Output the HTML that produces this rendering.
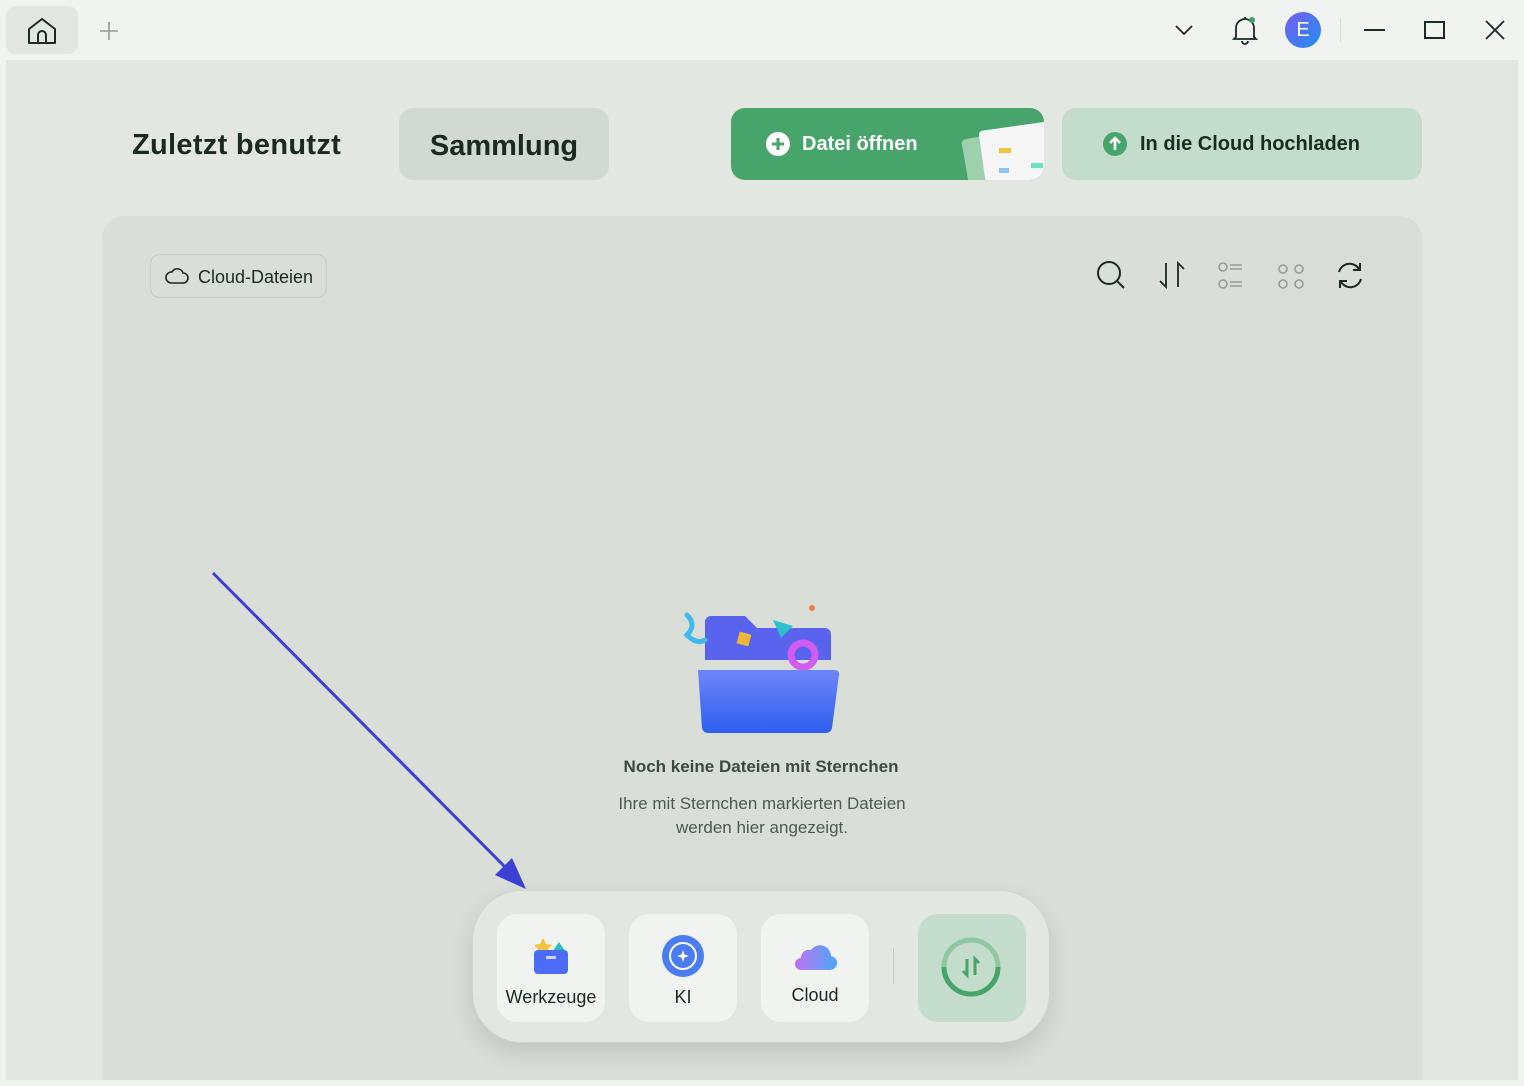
<!DOCTYPE html>
<html><head><meta charset="utf-8"><style>
*{margin:0;padding:0;box-sizing:border-box}
body{width:1524px;height:1086px;background:#f1f3f0;font-family:"Liberation Sans","DejaVu Sans",sans-serif;position:relative;overflow:hidden;color:#1a2a1f}
.abs{position:absolute}
.main{left:6px;top:60px;width:1512px;height:1020px;background:#e2e7e2}
.panel{left:102px;top:216px;width:1320px;height:864px;background:#d9dfd8;border-radius:22px 22px 0 0}
.tab{font-weight:bold;font-size:29px}
.btn{border-radius:14px;font-weight:bold;font-size:20px;display:flex;align-items:center}
.card{width:108px;height:108px;border-radius:20px;background:#f0f3ef;font-size:18px;text-align:center}
</style></head><body>
<div class="abs" style="left:6px;top:6px;width:72px;height:48px;background:#e2e7e2;border-radius:10px"></div>
<svg class="abs" style="left:26px;top:16px" width="32" height="30" viewBox="0 0 32 30"><path d="M3 13 L16 3 L29 13 V27 H3 Z M12 27 V19 a4 4 0 0 1 8 0 V27" fill="none" stroke="#1a2a1f" stroke-width="2" stroke-linejoin="round"/></svg>
<svg class="abs" style="left:99px;top:21px" width="20" height="20"><path d="M10 1V19M1 10H19" stroke="#999" stroke-width="1.6"/></svg>
<svg class="abs" style="left:1174px;top:23px" width="20" height="14"><path d="M2 3 L10 11 L18 3" fill="none" stroke="#1a2a1f" stroke-width="1.8"/></svg>
<svg class="abs" style="left:1230px;top:14px" width="30" height="32"><path d="M6 23 V14 a9 9 0 0 1 18 0 V23 L26 25 H4 Z M12 27 a3 3 0 0 0 6 0 M15 3 V5" fill="none" stroke="#1a2a1f" stroke-width="1.8"/><circle cx="22" cy="6" r="3" fill="#3fa06a"/></svg>
<div class="abs" style="left:1285px;top:12px;width:36px;height:36px;border-radius:50%;background:linear-gradient(135deg,#7b5cf0,#1e8ff0);color:#fff;font-size:20px;text-align:center;line-height:36px">E</div>
<div class="abs" style="left:1340px;top:18px;width:1px;height:24px;background:#ddd"></div>
<div class="abs" style="left:1364px;top:29px;width:21px;height:2px;background:#1a2a1f"></div>
<div class="abs" style="left:1424px;top:21px;width:21px;height:18px;border:2px solid #1a2a1f"></div>
<svg class="abs" style="left:1485px;top:20px" width="20" height="20"><path d="M1 1L19 19M19 1L1 19" stroke="#1a2a1f" stroke-width="1.8"/></svg>
<div class="abs main"></div>
<div class="abs tab" style="left:132px;top:129px;letter-spacing:0.3px">Zuletzt benutzt</div>
<div class="abs tab" style="left:399px;top:108px;width:210px;height:72px;background:#d2d9d3;border-radius:14px;line-height:76px;text-align:center">Sammlung</div>
<div class="abs btn" style="left:731px;top:108px;width:313px;height:72px;background:#47a46b;color:#fff;overflow:hidden">
 <svg style="margin-left:35px" width="24" height="24"><circle cx="12" cy="12" r="12" fill="#fff"/><path d="M12 6V18M6 12H18" stroke="#47a46b" stroke-width="3"/></svg>
 <span style="margin-left:12px">Datei öffnen</span>
 <div class="abs" style="left:235px;top:28px;width:40px;height:60px;background:#9fd0ae;transform:rotate(-10deg);border-radius:4px"></div>
 <div class="abs" style="left:252px;top:18px;width:70px;height:70px;background:#f5f6f5;transform:rotate(-8deg);border-radius:4px"></div>
 <div class="abs" style="left:268px;top:40px;width:12px;height:5px;background:#f3c33c"></div>
 <div class="abs" style="left:268px;top:60px;width:10px;height:5px;background:#8ec8f0"></div>
 <div class="abs" style="left:300px;top:55px;width:12px;height:5px;background:#6de0c4"></div>
</div>
<div class="abs btn" style="left:1062px;top:108px;width:360px;height:72px;background:#c4dccb">
 <svg style="margin-left:41px" width="24" height="24"><circle cx="12" cy="12" r="12" fill="#47a46b"/><path d="M12 18V7M7 11L12 6L17 11" fill="none" stroke="#fff" stroke-width="2.6"/></svg>
 <span style="margin-left:13px">In die Cloud hochladen</span>
</div>
<div class="abs panel"></div>
<div class="abs" style="left:150px;top:254px;width:177px;height:44px;border:1px solid #c6cdc6;border-radius:10px;font-size:18px;line-height:44px;padding-left:47px">Cloud-Dateien</div>
<svg class="abs" style="left:164px;top:266px" width="26" height="20"><path d="M7 17 H19 a5 5 0 0 0 0-10 a6 6 0 0 0-11-1 a5.5 5.5 0 0 0-1 11 Z" fill="none" stroke="#1a2a1f" stroke-width="1.6"/></svg>
<svg class="abs" style="left:1094px;top:258px" width="290" height="36">
 <circle cx="15" cy="15" r="11" fill="none" stroke="#1a2a1f" stroke-width="2"/><path d="M23 23L30 30" stroke="#1a2a1f" stroke-width="2"/>
 <path d="M72 5V29L66 23M84 29V5L90 11" fill="none" stroke="#1a2a1f" stroke-width="1.8"/>
 <g fill="none" stroke="#999" stroke-width="1.6"><circle cx="129" cy="9" r="4"/><circle cx="129" cy="26" r="4"/><path d="M136 7H148M136 11H148M136 24H148M136 28H148"/>
 <circle cx="189" cy="11" r="4"/><circle cx="205" cy="11" r="4"/><circle cx="189" cy="26" r="4"/><circle cx="205" cy="26" r="4"/></g>
 <path d="M245 14 a11 11 0 0 1 20-3 M266 5V12H259 M267 21 a11 11 0 0 1-20 3 M246 30V23H253" fill="none" stroke="#1a2a1f" stroke-width="2"/>
</svg>
<svg class="abs" style="left:675px;top:600px" width="170" height="140">
 <defs><linearGradient id="g" x1="0" y1="0" x2="0" y2="1"><stop offset="0" stop-color="#6d86f8"/><stop offset="1" stop-color="#2f5ef0"/></linearGradient></defs>
 <path d="M30 60 V22 a6 6 0 0 1 6-6 H70 L82 28 H150 a6 6 0 0 1 6 6 V60Z" fill="#5a63ee"/>
 <circle cx="128" cy="55" r="12" fill="none" stroke="#d35cf0" stroke-width="7"/>
 <path d="M98 20 L118 26 L106 38Z" fill="#2bc0d0"/>
 <rect x="63" y="33" width="12" height="12" fill="#f2b637" transform="rotate(15 69 39)"/>
 <circle cx="137" cy="8" r="3" fill="#f07c44"/>
 <path d="M12 15 q10 10 0 20 q10 10 18 5" fill="none" stroke="#43b8f0" stroke-width="5" stroke-linecap="round"/>
 <path d="M23 70 H160 a4 4 0 0 1 4 5 L157 128 a6 6 0 0 1-6 5 H33 a6 6 0 0 1-6-5 Z" fill="url(#g)"/>
</svg>
<div class="abs" style="left:0;width:1524px;top:757px;text-align:center;font-weight:bold;font-size:17px;color:#3a4a3f;padding-right:2px">Noch keine Dateien mit Sternchen</div>
<div class="abs" style="left:0;width:1524px;top:792px;text-align:center;font-size:17px;line-height:24px;color:#4a5a4f">Ihre mit Sternchen markierten Dateien<br>werden hier angezeigt.</div>
<svg class="abs" style="left:0;top:0" width="1524" height="1086"><path d="M213 573 L510 872" stroke="#3b40d4" stroke-width="3"/><path d="M526 889 L495 875 L512 858Z" fill="#3b40d4"/></svg>
<div class="abs" style="left:472px;top:890px;width:578px;height:153px;background:#e2e7e2;border:1px solid #cbd8cc;border-radius:50px;box-shadow:0 10px 24px rgba(0,0,0,.12)"></div>
<div class="abs card" style="left:497px;top:914px"><svg style="margin-top:22px" width="40" height="40"><path d="M12 2 l3 6 6 1-4 4 1 6-6-3-6 3 1-6-4-4 6-1z" fill="#f3c33c"/><path d="M28 6 l7 10h-14z" fill="#2bc0c0"/><rect x="3" y="14" width="34" height="24" rx="4" fill="#4c6cf5"/><rect x="15" y="20" width="10" height="3" fill="#c8d4ff"/></svg><div style="margin-top:6px">Werkzeuge</div></div>
<div class="abs card" style="left:629px;top:914px"><svg style="margin-top:20px" width="44" height="44"><circle cx="22" cy="22" r="21" fill="#4b7cf0"/><circle cx="22" cy="22" r="13" fill="none" stroke="#fff" stroke-width="2"/><path d="M22 16 l2 6-2 6-2-6z M16 22 l6-2 6 2-6 2z" fill="#fff"/></svg><div style="margin-top:4px">KI</div></div>
<div class="abs card" style="left:761px;top:914px"><svg style="margin-top:24px" width="44" height="36"><defs><linearGradient id="c" x1="0" x2="1"><stop offset="0" stop-color="#c070f0"/><stop offset="1" stop-color="#4aa8f8"/></linearGradient></defs><path d="M8 32 H36 a7 7 0 0 0 2-14 a11 11 0 0 0-20-6 a8 8 0 0 0-10 8 a6 6 0 0 0 0 12z" fill="url(#c)"/></svg><div style="margin-top:6px">Cloud</div></div>
<div class="abs" style="left:893px;top:948px;width:1px;height:36px;background:#c6cdc6"></div>
<div class="abs" style="left:918px;top:914px;width:108px;height:108px;border-radius:20px;background:#c4dccb"></div>
<svg class="abs" style="left:939px;top:935px" width="64" height="64"><circle cx="32" cy="32" r="27" fill="none" stroke="#8fc7a2" stroke-width="5"/><path d="M5 32 A27 27 0 0 0 59 32" fill="none" stroke="#47a46b" stroke-width="5"/><path d="M28 24V40L24 36M36 40V24L40 28" fill="none" stroke="#47a46b" stroke-width="3"/></svg>
</body></html>
